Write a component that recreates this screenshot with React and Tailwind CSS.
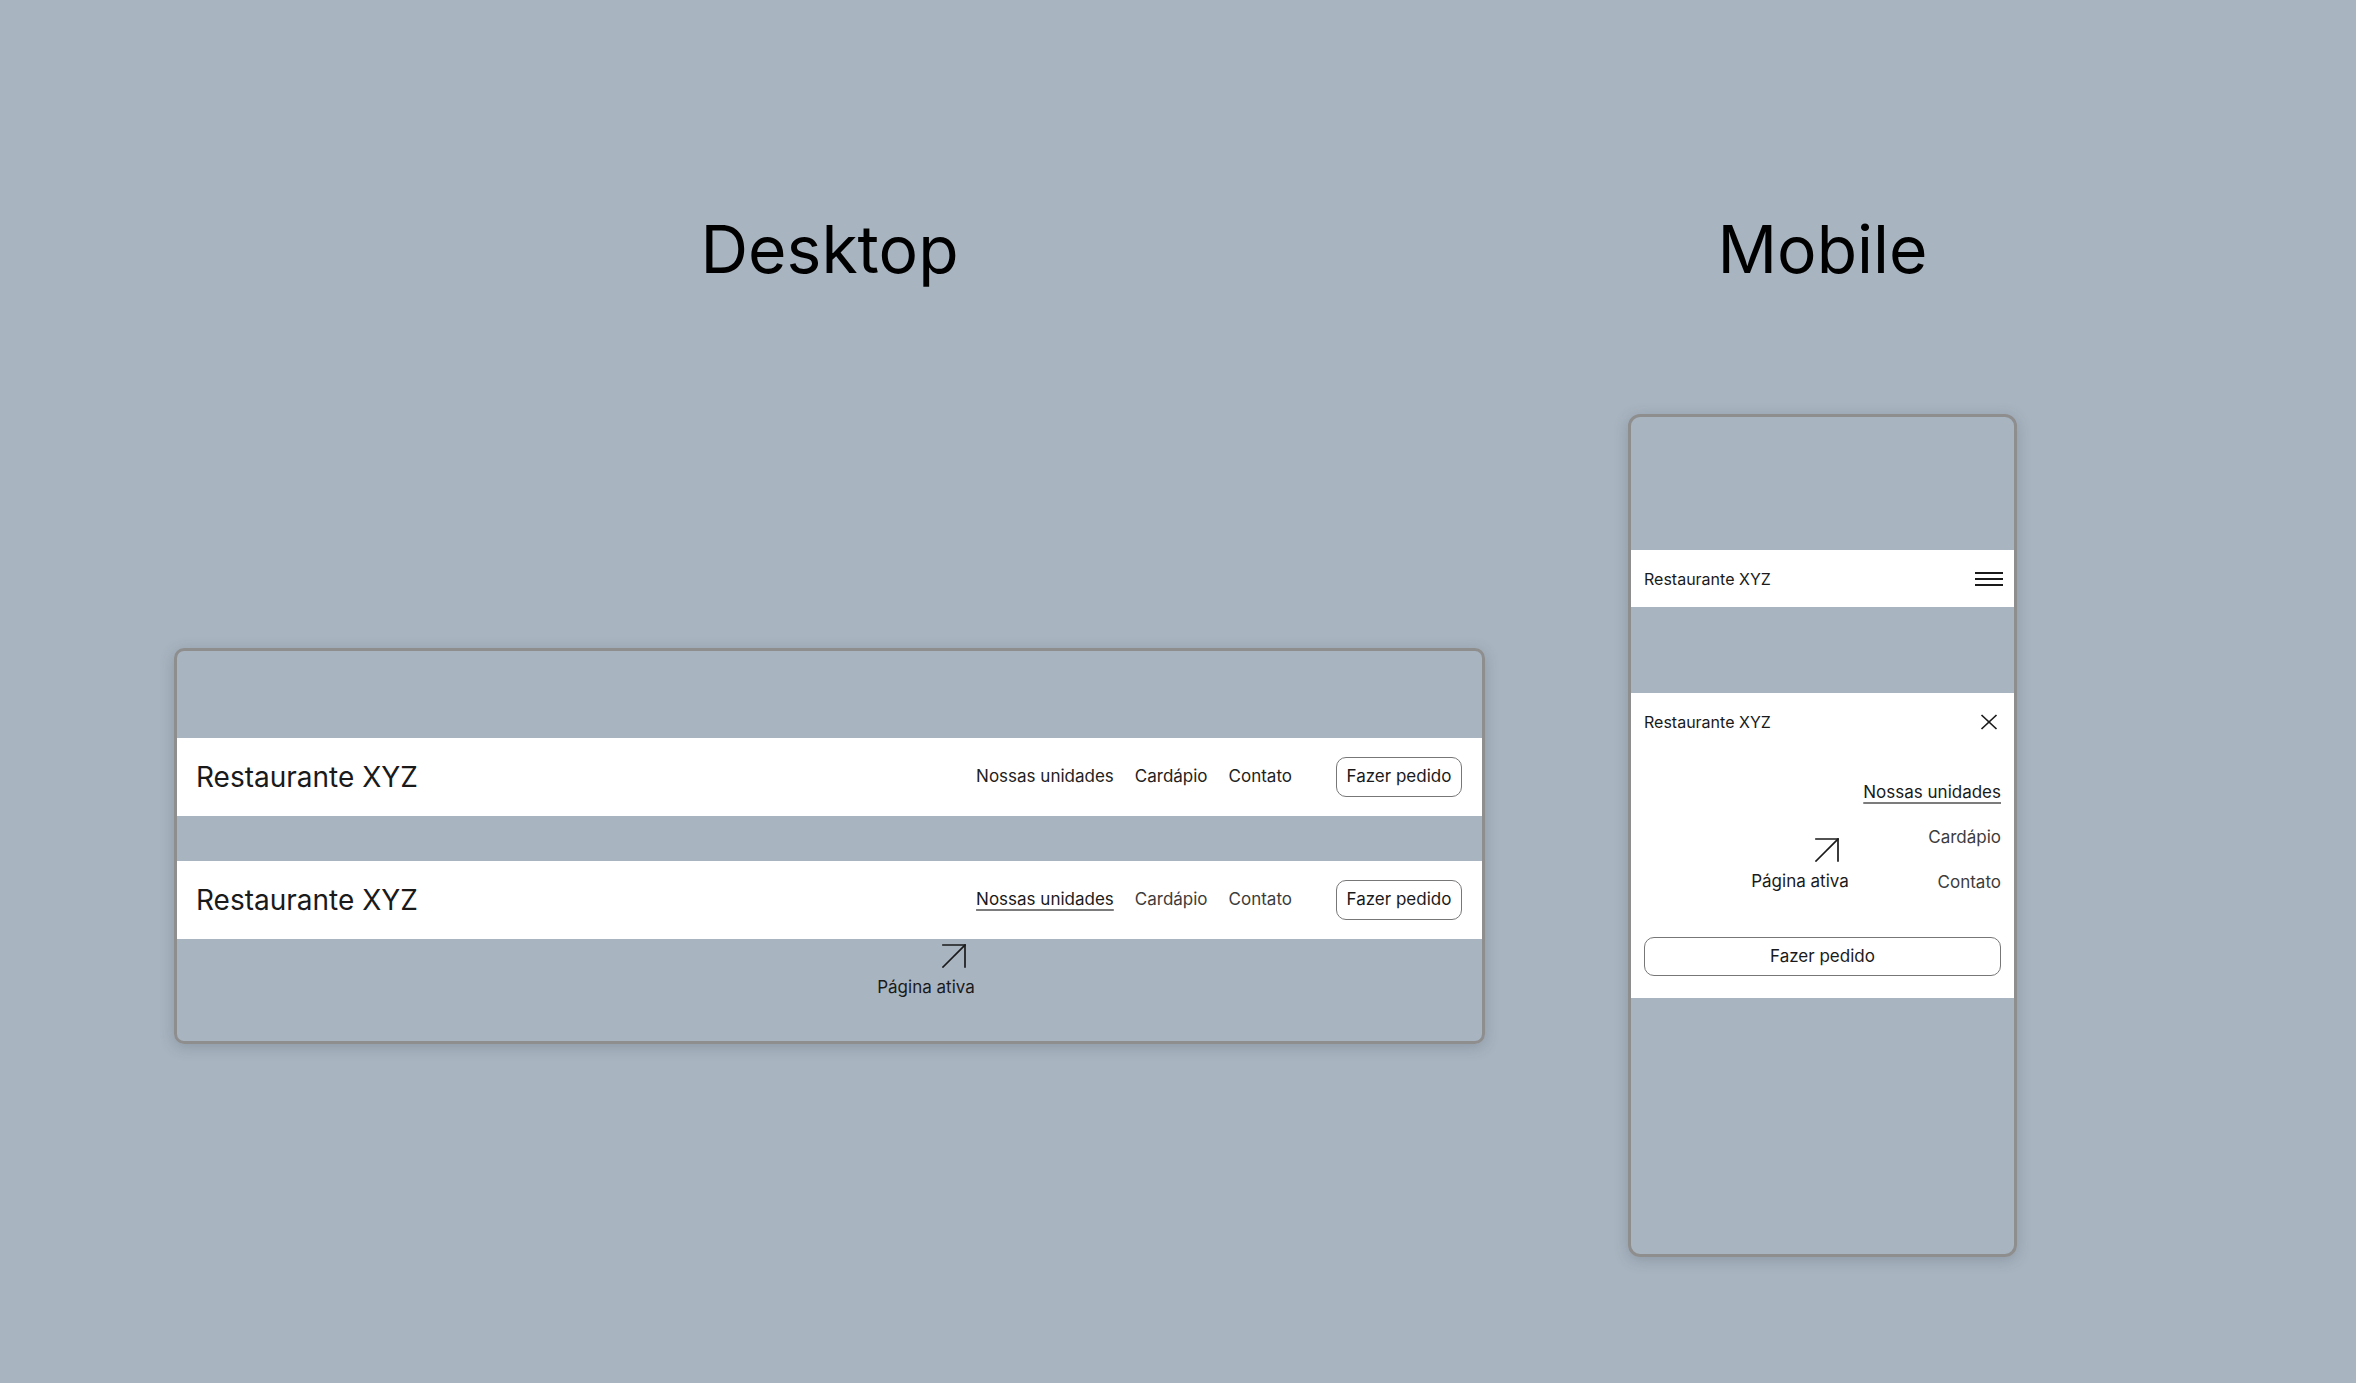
import React from "react";

// arrow used to point at the active page
function PointerArrow() {
  return (
    <svg width="24" height="24" viewBox="0 0 24 24" fill="none" stroke="#1a1a1a" strokeWidth="1.7" strokeLinecap="square">
      <path d="M1 1H23V23" />
      <path d="M1 23L23 1" />
    </svg>
  );
}

function Burger() {
  return (
    <svg width="28" height="14" viewBox="0 0 28 14" fill="#1a1a1a">
      <rect x="0" y="0" width="28" height="2" />
      <rect x="0" y="6" width="28" height="2" />
      <rect x="0" y="12" width="28" height="2" />
    </svg>
  );
}

function CloseIcon() {
  return (
    <svg width="24" height="24" viewBox="0 0 24 24" fill="none" stroke="#1a1a1a" strokeWidth="1.7">
      <path d="M4.5 5L19.5 19" />
      <path d="M19.5 5L4.5 19" />
    </svg>
  );
}

const LINKS = ["Nossas unidades", "Cardápio", "Contato"];

function ActiveNote({ className, arrowOffset }) {
  return (
    <div className={`absolute w-[98px] flex flex-col ${className}`}>
      <div style={{ marginLeft: arrowOffset }}>
        <PointerArrow />
      </div>
      <span className="mt-[9px] w-full text-center text-[17px] leading-5 text-[#1a1a1a] whitespace-nowrap">Página ativa</span>
    </div>
  );
}

function DesktopNav({ active }) {
  return (
    <div className="h-[78px] bg-white flex items-center justify-between pl-[19px] pr-5">
      <span className="text-[28px] text-[#1a1a1a]">Restaurante XYZ</span>
      <div className="flex items-center">
        <nav className="flex items-center gap-[21px] text-[17px]">
          {LINKS.map((l, i) => (
            <span
              key={l}
              className={
                active == null
                  ? "text-[#222]"
                  : i === active
                  ? "text-[#1a1a1a] underline decoration-2 decoration-[#7c7c7c] underline-offset-[4px]"
                  : "text-[#3c3c3c]"
              }
            >
              {l}
            </span>
          ))}
        </nav>
        <button className="ml-[44px] h-[40px] w-[126px] rounded-[10px] border border-[#777] text-[17px] text-[#1a1a1a]">
          Fazer pedido
        </button>
      </div>
    </div>
  );
}

export default function App() {
  return (
    <div className="w-[2356px] h-[1383px] bg-[#a8b4c0] font-['Inter',sans-serif] flex pl-[174px] overflow-hidden">
      <div className="w-[1311px] flex flex-col items-center">
        <h1 className="mt-[216px] text-[66px] leading-none text-black font-normal">Desktop</h1>
        <div className="mt-[366px] w-full h-[396px] border-[3px] border-[#8e8e8e] rounded-[10px] overflow-hidden shadow-[0_3px_14px_rgba(60,70,85,0.25)] flex flex-col">
          <div className="h-[87px] shrink-0" />
          <DesktopNav />
          <div className="h-[45px] shrink-0" />
          <DesktopNav active={0} />
          <div className="relative flex-1">
            <ActiveNote className="left-[700px] top-[5px]" arrowOffset={65} />
          </div>
        </div>
      </div>

      <div className="ml-[143px] w-[389px] flex flex-col items-center">
        <h1 className="mt-[216px] text-[66px] leading-none text-black font-normal">Mobile</h1>
        <div className="mt-[132px] w-full h-[843px] border-[3px] border-[#8e8e8e] rounded-[12px] overflow-hidden shadow-[0_3px_14px_rgba(60,70,85,0.25)] flex flex-col">
          <div className="h-[133px] shrink-0" />
          <div className="h-[57px] shrink-0 bg-white flex items-center justify-between pl-[13px] pr-[11px]">
            <span className="text-[16px] text-[#1a1a1a]">Restaurante XYZ</span>
            <Burger />
          </div>
          <div className="h-[86px] shrink-0" />
          <div className="relative shrink-0 bg-white px-[13px] pb-[22px]">
            <div className="h-[58px] flex items-center justify-between">
              <span className="text-[16px] text-[#1a1a1a]">Restaurante XYZ</span>
              <CloseIcon />
            </div>
            <div className="mt-[29px] flex flex-col items-end gap-[21px] text-[17px]">
              <span className="h-6 leading-6 text-[#1a1a1a] underline decoration-2 decoration-[#7c7c7c] underline-offset-[4px]">Nossas unidades</span>
              <span className="h-6 leading-6 text-[#3c3c3c]">Cardápio</span>
              <span className="h-6 leading-6 text-[#3c3c3c]">Contato</span>
            </div>
            <button className="mt-[43px] w-full h-[39px] rounded-[10px] border border-[#777] text-[17px] text-[#1a1a1a]">
              Fazer pedido
            </button>
            <ActiveNote className="left-[120px] top-[145px]" arrowOffset={64} />
          </div>
        </div>
      </div>
    </div>
  );
}
